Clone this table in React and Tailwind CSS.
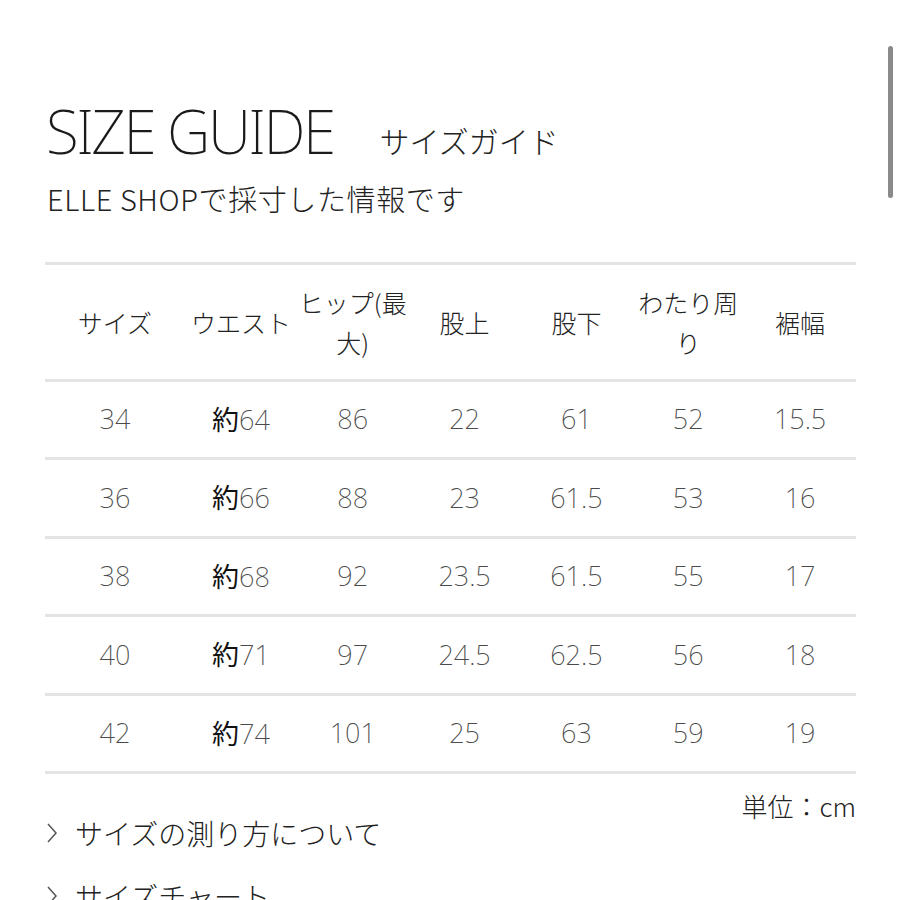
const rows = [
  ["34", "64", "86", "22", "61", "52", "15.5"],
  ["36", "66", "88", "23", "61.5", "53", "16"],
  ["38", "68", "92", "23.5", "61.5", "55", "17"],
  ["40", "71", "97", "24.5", "62.5", "56", "18"],
  ["42", "74", "101", "25", "63", "59", "19"],
];

const headers = ["サイズ", "ウエスト", "ヒップ(最大)", "股上", "股下", "わたり周り", "裾幅"];

const jp = { fontFamily: '"Noto Sans CJK JP", "Noto Sans", sans-serif' };
const thin = { fontFamily: '"Noto Sans", "Noto Sans CJK JP", sans-serif' };

function Chevron() {
  return (
    <svg width="14" height="24" viewBox="0 0 14 24" fill="none" stroke="#555" strokeWidth="1.5">
      <path d="M3 3l8 9-8 9" />
    </svg>
  );
}

export default function App() {
  return (
    <div className="relative w-[900px] h-[900px] overflow-hidden bg-white text-[#222]" style={jp}>
      {/* scrollbar */}
      <div className="absolute right-[7px] top-[46px] w-[5px] h-[152px] rounded-full bg-[#8a8a8a]" />

      <div className="pl-[45px] pr-[44px] pt-[96px]">
        {/* Title */}
        <div className="flex items-end pl-[1px]">
          <h1 className="text-[60px] leading-[70px] font-extralight tracking-[-2.5px] text-[#1a1a1a]" style={thin}>
            SIZE GUIDE
          </h1>
          <span className="ml-[46px] mb-[8px] text-[30px] leading-[36px] font-light text-[#222]">サイズガイド</span>
        </div>
        <p className="mt-[14px] pl-[2px] text-[29px] leading-[36px] font-light tracking-[0.6px] text-[#222]">ELLE SHOPで採寸した情報です</p>

        {/* Table */}
        <div className="mt-[46px] border-t-[3px] border-[#e4e4e4]">
          <div className="grid grid-cols-[140px_repeat(6,1fr)] h-[117px] items-center border-b-[3px] border-[#e4e4e4]">
            {headers.map((h) => (
              <div key={h} className="text-center text-[25px] leading-[40px] font-light text-[#222] break-all">
                {h}
              </div>
            ))}
          </div>
          {rows.map((r) => (
            <div key={r[0]} className="grid grid-cols-[140px_repeat(6,1fr)] h-[78.4px] items-center border-b-[3px] border-[#e4e4e4]">
              {r.map((v, i) => (
                <div key={i} className="text-center text-[27px] font-extralight text-[#4a4a4a]" style={thin}>
                  {i === 1 ? (
                    <>
                      <span className="font-normal text-[#111]" style={jp}>約</span>
                      {v}
                    </>
                  ) : (
                    v
                  )}
                </div>
              ))}
            </div>
          ))}
        </div>

        <div className="mt-[16px] text-right text-[26px] leading-[32px] font-light">単位：cm</div>

        <div className="mt-[-7px] flex items-center gap-[16px]">
          <Chevron />
          <span className="text-[28px] leading-[36px] font-light">サイズの測り方について</span>
        </div>
        <div className="mt-[27px] flex items-center gap-[16px]">
          <Chevron />
          <span className="text-[28px] leading-[36px] font-light">サイズチャート</span>
        </div>
      </div>
    </div>
  );
}
